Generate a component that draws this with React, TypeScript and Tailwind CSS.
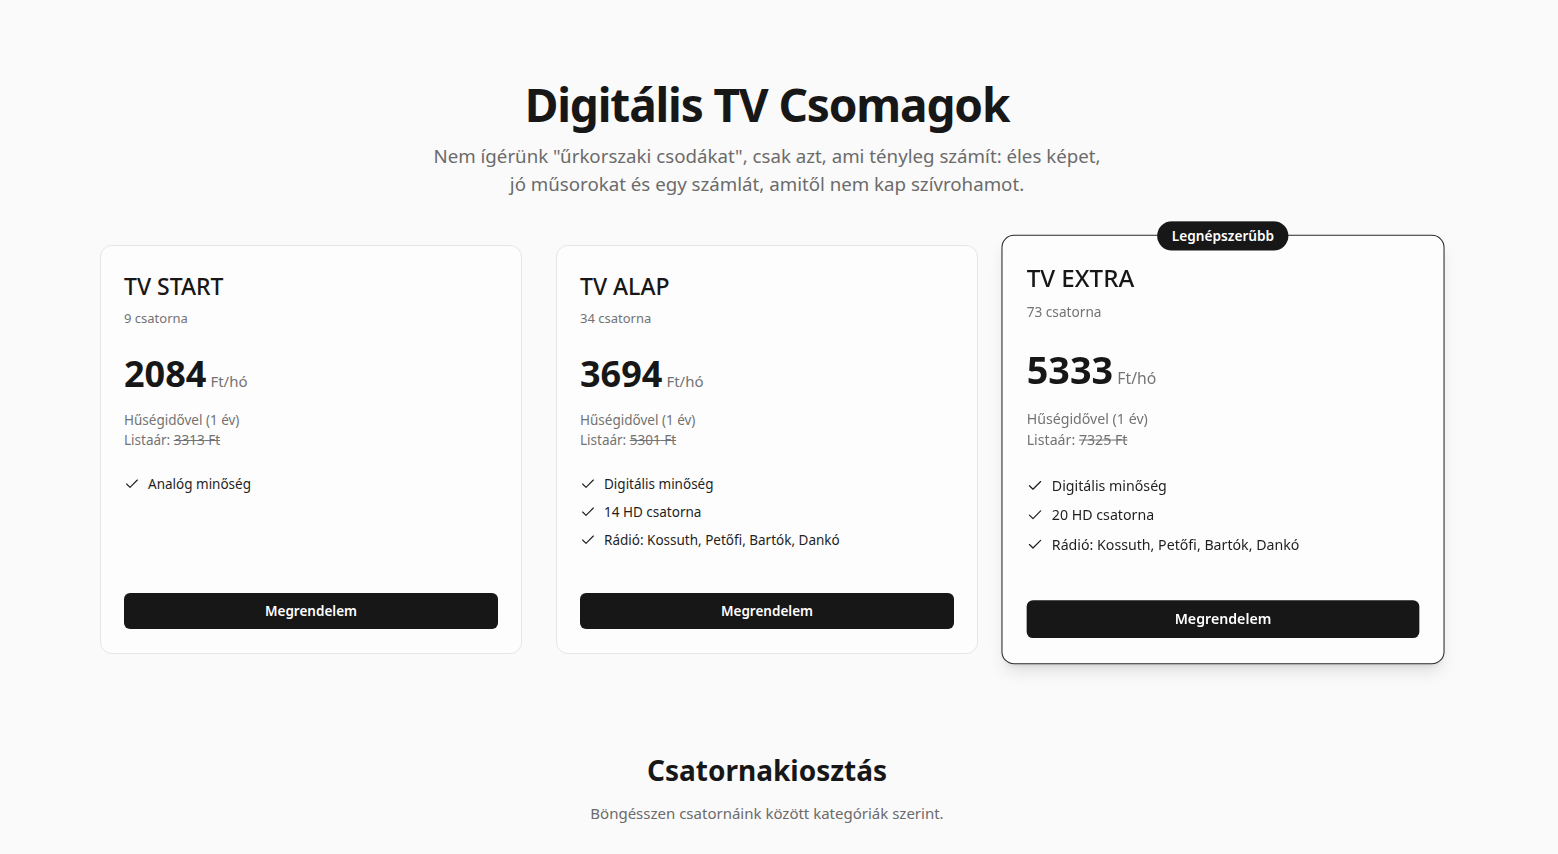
import { Check } from 'lucide-react';

interface Plan {
  name: string;
  channels: number;
  price: number;
  listPrice: number;
  features: string[];
  featured?: boolean;
}

const plans: Plan[] = [
  { name: 'TV START', channels: 9, price: 2084, listPrice: 3313, features: ['Analóg minőség'] },
  {
    name: 'TV ALAP',
    channels: 34,
    price: 3694,
    listPrice: 5301,
    features: ['Digitális minőség', '14 HD csatorna', 'Rádió: Kossuth, Petőfi, Bartók, Dankó'],
  },
  {
    name: 'TV EXTRA',
    channels: 73,
    price: 5333,
    listPrice: 7325,
    features: ['Digitális minőség', '20 HD csatorna', 'Rádió: Kossuth, Petőfi, Bartók, Dankó'],
    featured: true,
  },
];

function PlanCard({ plan }: { plan: Plan }) {
  return (
    <div
      className={`relative flex flex-col rounded-xl border bg-[#fdfdfd] px-[23px] pt-[22px] pb-6 ${
        plan.featured ? 'scale-105 border-[#2a2a2a] shadow-lg z-10' : 'border-[#e6e6e6]'
      }`}
    >
      {plan.featured && (
        <div className="absolute -top-3.5 left-1/2 -translate-x-1/2 rounded-full bg-[#171717] px-3.5 py-1 text-[13px] leading-5 font-semibold text-white">
          Legnépszerűbb
        </div>
      )}
      <h3 className="text-[23px] leading-9 font-medium text-[#171717]">{plan.name}</h3>
      <p className="mt-1 text-[13px] leading-5 text-[#737373]">{plan.channels} csatorna</p>

      <div className="mt-[26px] flex items-baseline gap-1">
        <span className="text-4xl leading-10 font-bold text-[#171717]">{plan.price}</span>
        <span className="text-[15px] text-[#737373]">Ft/hó</span>
      </div>

      <div className="mt-4 text-[13.5px] leading-5 text-[#737373]">
        <p>Hűségidővel (1 év)</p>
        <p>
          Listaár: <span className="line-through">{plan.listPrice} Ft</span>
        </p>
      </div>

      <ul className="mt-6 flex-1 space-y-2 pb-[43px]">
        {plan.features.map(f => (
          <li key={f} className="flex items-center gap-2 text-[13.5px] leading-5 text-[#1f1f1f]">
            <Check className="h-4 w-4 shrink-0" strokeWidth={1.75} />
            {f}
          </li>
        ))}
      </ul>

      <button className="h-9 w-full rounded-md bg-[#171717] text-[13.5px] font-semibold text-white">
        Megrendelem
      </button>
    </div>
  );
}

export default function App() {
  return (
    <div
      className="min-h-screen bg-[#fafafa] pr-6"
      style={{ fontFamily: '"Noto Sans", "Open Sans", sans-serif' }}
    >
      <section className="pt-[72px] text-center">
        <h1 className="text-[46px] leading-[64px] font-bold tracking-tight text-[#171717]">
          Digitális TV Csomagok
        </h1>
        <p className="mx-auto mt-1.5 max-w-[680px] text-[18.7px] leading-7 text-[#6b6b6b]">
          Nem ígérünk "űrkorszaki csodákat", csak azt, ami tényleg számít: éles képet, jó műsorokat és
          egy számlát, amitől nem kap szívrohamot.
        </p>
      </section>

      <section className="mx-auto mt-[47px] grid w-[1334px] grid-cols-3 gap-[34px]">
        {plans.map(p => (
          <PlanCard key={p.name} plan={p} />
        ))}
      </section>

      <section className="pt-[96px] pb-10 text-center">
        <h2 className="text-[28px] leading-10 font-bold text-[#171717]">Csatornakiosztás</h2>
        <p className="mt-3 text-[15px] text-[#6b6b6b]">Böngésszen csatornáink között kategóriák szerint.</p>
      </section>
    </div>
  );
}
